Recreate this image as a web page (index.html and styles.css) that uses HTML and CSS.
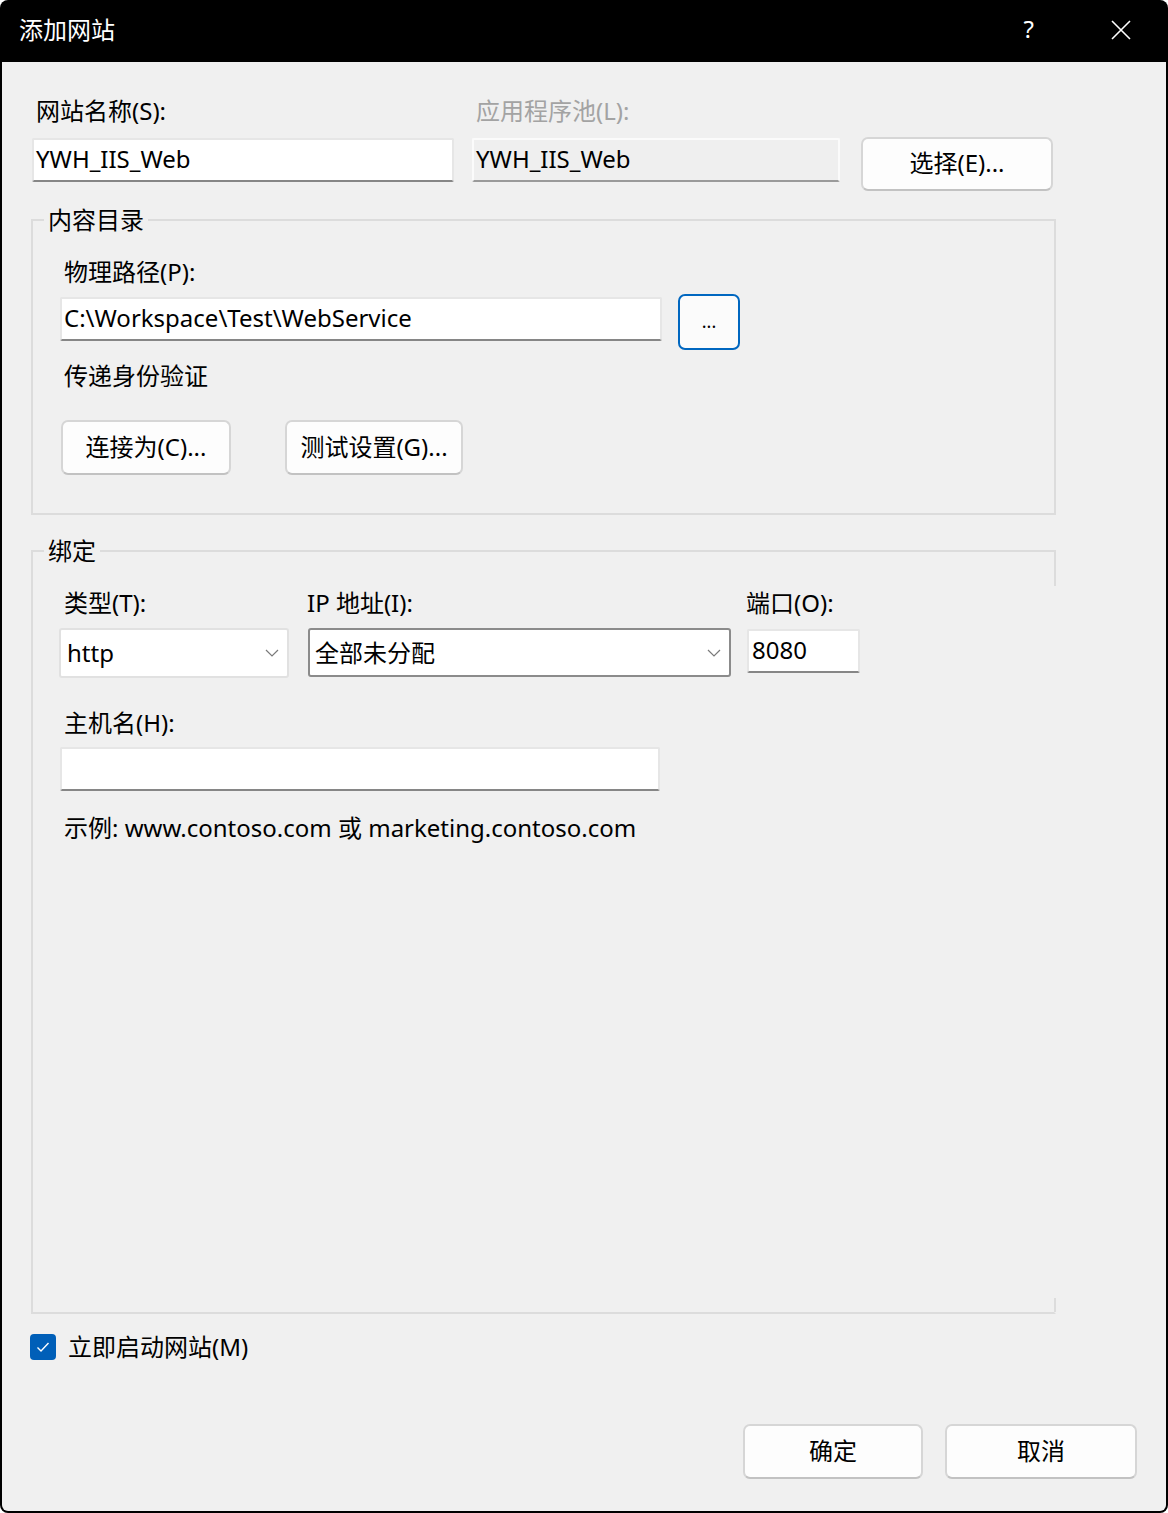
FILE: index.html
```html
<!DOCTYPE html>
<html lang="zh-CN">
<head>
<meta charset="utf-8">
<title>添加网站</title>
<link rel="stylesheet" href="styles.css">
</head>
<body>
<div class="window">
  <div class="titlebar">
    <span class="title">添加网站</span>
    <span class="help">?</span>
    <svg class="close" width="20" height="20" viewBox="0 0 20 20"><path d="M1 1 L19 19 M19 1 L1 19" stroke="#fff" stroke-width="1.6" fill="none"/></svg>
  </div>
  <div class="client">
    <div class="top-row">
      <div class="field f-name">
        <div class="label">网站名称(S):</div>
        <div class="textbox">YWH_IIS_Web</div>
      </div>
      <div class="field f-pool">
        <div class="label disabled">应用程序池(L):</div>
        <div class="textbox readonly">YWH_IIS_Web</div>
      </div>
      <div class="btn btn-select">选择(E)...</div>
    </div>

    <fieldset class="group group-content">
      <legend>内容目录</legend>
      <div class="group-body">
        <div class="label">物理路径(P):</div>
        <div class="path-row">
          <div class="textbox path">C:\Workspace\Test\WebService</div>
          <div class="btn btn-browse">...</div>
        </div>
        <div class="label pass">传递身份验证</div>
        <div class="auth-row">
          <div class="btn btn-connect">连接为(C)...</div>
          <div class="btn btn-test">测试设置(G)...</div>
        </div>
      </div>
    </fieldset>

    <fieldset class="group group-binding">
      <legend>绑定</legend>
      <div class="group-body binding-body">
        <div class="bind-row">
          <div class="col col-type">
            <div class="label">类型(T):</div>
            <div class="select light"><span>http</span><svg width="14" height="8" viewBox="0 0 14 8"><path d="M1 1 L7 7 L13 1" stroke="#7a7a7a" stroke-width="1.2" fill="none"/></svg></div>
          </div>
          <div class="col col-ip">
            <div class="label">IP 地址(I):</div>
            <div class="select dark"><span>全部未分配</span><svg width="14" height="8" viewBox="0 0 14 8"><path d="M1 1 L7 7 L13 1" stroke="#7a7a7a" stroke-width="1.2" fill="none"/></svg></div>
          </div>
          <div class="col col-port">
            <div class="label">端口(O):</div>
            <div class="textbox port">8080</div>
          </div>
        </div>
        <div class="label host-label">主机名(H):</div>
        <div class="textbox host"></div>
        <div class="label example">示例: www.contoso.com 或 marketing.contoso.com</div>
      </div>
    </fieldset>

    <div class="check-row">
      <span class="checkbox"><svg width="14" height="12" viewBox="0 0 14 12"><path d="M1.5 6.5 L5 10 L12.5 2" stroke="#fff" stroke-width="1.4" fill="none"/></svg></span>
      <span class="check-label">立即启动网站(M)</span>
    </div>

    <div class="footer">
      <div class="btn btn-ok">确定</div>
      <div class="btn btn-cancel">取消</div>
    </div>
  </div>
</div>
</body>
</html>
```

FILE: styles.css
```css
html, body {
  margin: 0;
  padding: 0;
  background: #ffffff;
}

body {
  font-family: "Noto Sans", "Noto Sans CJK SC", sans-serif;
  font-size: 24px;
  color: #000;
}

.window {
  width: 1168px;
  height: 1513px;
  background: #000;
  border-radius: 8px;
  overflow: hidden;
  display: flex;
  flex-direction: column;
  box-sizing: border-box;
}

.titlebar {
  height: 62px;
  flex: none;
  display: flex;
  align-items: center;
  padding-left: 19px;
  color: #fff;
}

.title {
  font-size: 24px;
  line-height: 30px;
  flex: 1;
  margin-top: -2px;
}

.help {
  font-size: 24px;
  line-height: 30px;
  margin-right: 77px;
  margin-top: -4px;
  font-family: "Noto Sans", sans-serif;
}

.close {
  margin-right: 37px;
  margin-top: -2px;
}

.client {
  flex: 1;
  margin: 0 2px 2px 2px;
  background: #f0f0f0;
  border-radius: 0 0 6px 6px;
  padding: 34px 29px 32px 29px;
  display: flex;
  flex-direction: column;
}

.label {
  line-height: 30px;
  height: 30px;
  white-space: nowrap;
}

.label.disabled {
  color: #a3a3a3;
}

.top-row {
  display: flex;
  align-items: flex-start;
}

.field {
  display: flex;
  flex-direction: column;
}

.field .label {
  margin-left: 4px;
  margin-bottom: 12px;
}

.f-name {
  width: 422px;
  margin-left: 1px;
}

.f-pool {
  width: 368px;
  margin-left: 18px;
}

.textbox {
  box-sizing: border-box;
  height: 44px;
  background: #fff;
  border: 2px solid #e6e6e6;
  border-bottom-color: #868686;
  border-radius: 2px;
  padding: 0 2px;
  line-height: 38px;
  white-space: nowrap;
  overflow: hidden;
}

.textbox.readonly {
  background: #efefef;
  border-color: #fbfbfb;
  border-bottom-color: #9a9a9a;
}

.btn {
  box-sizing: border-box;
  background: #fdfdfd;
  border: 2px solid #d6d6d6;
  border-bottom-color: #c2c2c2;
  border-radius: 7px;
  display: flex;
  align-items: center;
  justify-content: center;
  white-space: nowrap;
  padding-bottom: 5px;
}

.btn-select {
  width: 192px;
  height: 54px;
  margin-left: 21px;
  margin-top: 41px;
}

.group {
  margin: 0;
  padding: 0;
  width: 1025px;
  box-sizing: border-box;
  border: 2px solid #dcdcdc;
  min-width: 0;
  flex: none;
}

.group legend {
  margin-left: 11px;
  padding: 0 4px;
  line-height: 30px;
  height: 30px;
}

.group-content {
  margin-top: 14px;
}

.group-body {
  padding: 22px 0 38px 27px;
}

.group-content .group-body > .label {
  margin-left: 4px;
}

.path-row {
  display: flex;
  align-items: flex-start;
  margin-top: 10px;
}

.textbox.path {
  width: 602px;
}

.btn-browse {
  width: 62px;
  height: 56px;
  margin-left: 16px;
  margin-top: -3px;
  border: 2px solid #0067c0;
  background: #fbfbfb;
  font-size: 18px;
  padding-bottom: 2px;
}

.label.pass {
  margin-top: 11px;
}

.auth-row {
  display: flex;
  margin-top: 29px;
}

.btn-connect {
  width: 170px;
  height: 55px;
  margin-left: 1px;
}

.btn-test {
  width: 178px;
  height: 55px;
  margin-left: 54px;
}

.group-binding {
  margin-top: 21px;
  height: 778px;
  position: relative;
  border-right-color: transparent;
}

.group-binding::before,
.group-binding::after {
  content: "";
  position: absolute;
  right: -2px;
  width: 2px;
  background: #dcdcdc;
}

.group-binding::before {
  top: -16px;
  height: 36px;
}

.group-binding::after {
  top: 732px;
  height: 14px;
}

.binding-body {
  padding: 22px 0 0 26px;
}

.bind-row {
  display: flex;
  align-items: flex-start;
}

.col {
  display: flex;
  flex-direction: column;
}

.col .label {
  margin-bottom: 10px;
}

.col-type {
  width: 230px;
}

.col-type .label {
  margin-left: 5px;
}

.col-ip {
  width: 423px;
  margin-left: 19px;
}

.col-ip .label {
  margin-left: -1px;
}

.col-port {
  width: 113px;
  margin-left: 16px;
}

.col-port .label {
  margin-left: -1px;
}

.select {
  box-sizing: border-box;
  height: 50px;
  background: #fff;
  border-radius: 3px;
  display: flex;
  align-items: center;
  justify-content: space-between;
  padding: 0 8px 2px 6px;
  white-space: nowrap;
}

.select svg {
  flex: none;
  margin-top: 2px;
}

.select.light {
  border: 2px solid #e1e1e1;
}

.select.dark {
  height: 49px;
  border: 2px solid #8b8b8b;
  padding-left: 5px;
}

.textbox.port {
  margin-top: 1px;
  padding-left: 3px;
}

.host-label {
  margin-top: 30px;
  margin-left: 5px;
}

.textbox.host {
  width: 600px;
  margin-left: 1px;
  margin-top: 9px;
}

.example {
  margin-top: 22px;
  margin-left: 5px;
}

.check-row {
  display: flex;
  align-items: center;
  margin-top: 20px;
  height: 26px;
}

.checkbox {
  width: 26px;
  height: 26px;
  margin-left: -1px;
  background: #005fb8;
  border-radius: 4px;
  display: flex;
  align-items: center;
  justify-content: center;
}

.check-label {
  margin-left: 12px;
  line-height: 30px;
}

.footer {
  margin-top: 64px;
  display: flex;
  justify-content: flex-end;
  gap: 22px;
}

.btn-ok {
  width: 180px;
  height: 55px;
}

.btn-cancel {
  width: 192px;
  height: 55px;
}
```
